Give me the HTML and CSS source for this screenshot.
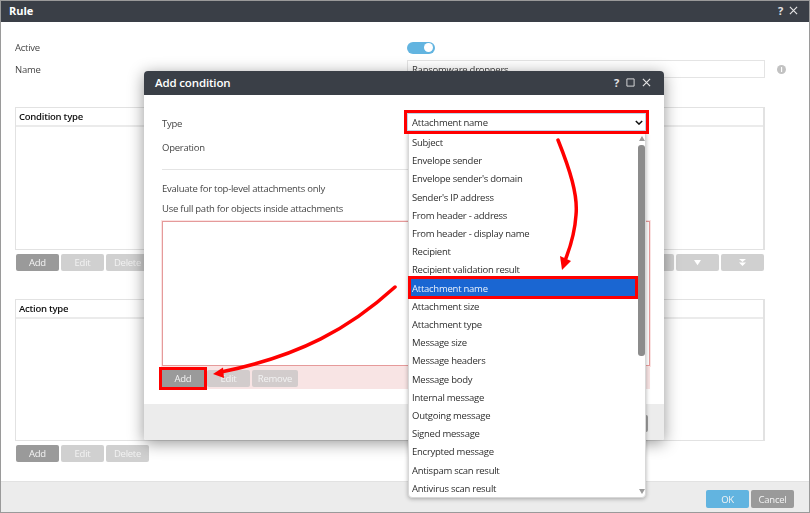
FILE: index.html
```html
<!DOCTYPE html>
<html lang="en">
<head>
<meta charset="utf-8">
<title>Rule</title>
<link rel="stylesheet" href="styles.css">
</head>
<body>
<div class="window">
  <header class="titlebar">
    <span class="title">Rule</span>
    <span class="title-tools">
      <span class="help">?</span>
      <svg class="tool" viewBox="0 0 10 10"><path d="M1 1l8 8M9 1l-8 8"/></svg>
    </span>
  </header>
  <main class="content">
    <div class="form">
      <span class="label">Active</span>
      <span class="toggle"><span class="knob"></span></span>
      <span></span>
      <span class="label">Name</span>
      <div class="input">Ransomware droppers</div>
      <span class="info">i</span>
    </div>
    <section class="table cond">
      <div class="thead">Condition type</div>
    </section>
    <div class="btnrow">
      <div class="btngroup">
        <button class="btn primary">Add</button><button class="btn">Edit</button><button class="btn">Delete</button>
      </div>
      <div class="btngroup">
        <button class="btn"><svg class="mv" viewBox="0 0 10 8"><path d="M5 1l4 6H1z"/></svg></button>
        <button class="btn"><svg class="mv" viewBox="0 0 10 8"><path d="M1 1h8L5 7z"/></svg></button>
        <button class="btn"><svg class="mv" viewBox="0 0 10 8"><path d="M1 0h8L5 3.500zM1 4h8L5 8z"/></svg></button>
      </div>
    </div>
    <section class="table act">
      <div class="thead">Action type</div>
    </section>
    <div class="btnrow">
      <div class="btngroup">
        <button class="btn primary">Add</button><button class="btn">Edit</button><button class="btn">Delete</button>
      </div>
    </div>
  </main>
  <footer class="footer">
    <button class="btn ok">OK</button><button class="btn primary">Cancel</button>
  </footer>
</div>

<div class="dialog">
  <header class="dlg-head">
    <span class="dlg-title">Add condition</span>
    <span class="dlg-tools">
      <span class="help">?</span>
      <svg class="tool small" viewBox="0 0 10 10"><path d="M1 1h8v8H1z"/></svg>
      <svg class="tool" viewBox="0 0 10 10"><path d="M1 1l8 8M9 1l-8 8"/></svg>
    </span>
  </header>
  <div class="dlg-body">
    <div class="dlg-form">
      <span class="label nudge">Type</span>
      <div class="select-wrap">
        <div class="select">
          <span>Attachment name</span>
          <svg class="chev" viewBox="0 0 10 6"><path d="M1 1l4 4 4-4"/></svg>
        </div>
        <div class="dropdown">
          <ul class="options">
            <li>Subject</li>
            <li>Envelope sender</li>
            <li>Envelope sender's domain</li>
            <li>Sender's IP address</li>
            <li>From header - address</li>
            <li>From header - display name</li>
            <li>Recipient</li>
            <li>Recipient validation result</li>
            <li class="selected">Attachment name</li>
            <li>Attachment size</li>
            <li>Attachment type</li>
            <li>Message size</li>
            <li>Message headers</li>
            <li>Message body</li>
            <li>Internal message</li>
            <li>Outgoing message</li>
            <li>Signed message</li>
            <li>Encrypted message</li>
            <li>Antispam scan result</li>
            <li>Antivirus scan result</li>
          </ul>
          <div class="scrollbar">
            <span class="arrow up"></span>
            <span class="thumb"></span>
            <span class="arrow down"></span>
          </div>
        </div>
      </div>
      <span class="label nudge">Operation</span>
      <span></span>
    </div>
    <hr class="rule">
    <div class="label opt">Evaluate for top-level attachments only</div>
    <div class="label opt">Use full path for objects inside attachments</div>
    <div class="invalid-list"></div>
    <div class="invalid-bar">
      <button class="btn primary marked">Add</button>
      <button class="btn tinted">Edit</button>
      <button class="btn tinted wide">Remove</button>
    </div>
  </div>
  <footer class="dlg-foot">
    <button class="btn primary">OK</button>
  </footer>
</div>

<svg class="arrows" viewBox="0 0 810 513">
  <path class="shaft" d="M558 140C570 170 578 195 576 215C575 230 571 245 566 258"/>
  <path class="head" d="M562 270L560 256L571 261z"/>
  <path class="shaft" d="M395 287C350 328 300 356 221 372"/>
  <path class="head" d="M213 374L223 367.500L224 378z"/>
</svg>
</body>
</html>
```

FILE: styles.css
```css
* { box-sizing: border-box; }
html, body { margin: 0; padding: 0; }
body {
  position: relative;
  width: 810px;
  height: 513px;
  overflow: hidden;
  background: #fff;
  font-family: "Open Sans", "Noto Sans", sans-serif;
  font-size: 9.5px;
  letter-spacing: -.25px;
  color: #444;
  filter: blur(.3px);
}
.window {
  width: 810px;
  height: 513px;
  border: 1px solid #9a9a9a;
  display: flex;
  flex-direction: column;
}
.titlebar {
  height: 21px;
  flex: none;
  background: #3a3f47;
  color: #fff;
  display: flex;
  align-items: center;
  justify-content: space-between;
  padding: 0 11px 2px 8px;
}
.title { font-size: 11px; font-weight: 700; letter-spacing: 0; }
.title-tools, .dlg-tools { display: flex; align-items: center; gap: 6px; }
.help { font-size: 11px; font-weight: 700; color: #e4e4e4; line-height: 1; }
.tool { width: 9px; height: 9px; fill: none; stroke: #e4e4e4; stroke-width: 1.3; }
.content { flex: 1; padding: 19px 44px 0 14px; }
.form {
  display: grid;
  grid-template-columns: 392px 358px auto;
  row-gap: 6px;
  align-items: center;
}
.label { color: #464646; }
.toggle {
  width: 28px;
  height: 12px;
  border-radius: 6px;
  background: #62b4e0;
  display: flex;
  justify-content: flex-end;
  align-items: center;
  padding-right: 2px;
}
.knob { width: 9px; height: 9px; border-radius: 50%; background: #fff; }
.input {
  height: 18px;
  border: 1px solid #e4e4e4;
  padding-left: 4px;
  line-height: 17px;
  color: #3c3c3c;
}
.info {
  width: 9px;
  height: 9px;
  margin: 0 0 0 12px;
  border-radius: 50%;
  background: #c2c2c2;
  color: #fff;
  font-size: 7px;
  font-weight: 700;
  line-height: 9px;
  text-align: center;
}
.table { border: 1px solid #e2e2e2; border-width: 1px 2px 1px 1px; }
.cond { height: 143px; margin-top: 29px; }
.act { height: 142px; margin-top: 28px; }
.thead {
  height: 19px;
  border-bottom: 2px solid #ebebeb;
  padding-left: 3px;
  color: #111;
  font-weight: 600;
  line-height: 17px;
}
.btnrow {
  display: flex;
  justify-content: space-between;
  margin-top: 4px;
  padding: 0 1px;
}
.btngroup { display: flex; gap: 2px; }
.btn {
  width: 43px;
  height: 17px;
  border: 0;
  border-radius: 2px;
  padding: 0;
  background: #d0d0d0;
  color: #f2f2f2;
  font: inherit;
  letter-spacing: inherit;
  line-height: 17px;
  display: flex;
  align-items: center;
  justify-content: center;
}
.btn.primary { background: #9a9a9a; color: #f4f4f4; }
.btn.ok { background: #62b4e0; color: #f4f4f4; }
.mv { width: 9px; height: 7px; fill: #fff; }
.footer {
  height: 31px;
  flex: none;
  background: #ececec;
  border-top: 1px solid #e2e2e2;
  display: flex;
  justify-content: flex-end;
  align-items: flex-start;
  gap: 2px;
  padding: 8px 15px 0 0;
}
.footer .btn { height: 18px; }

.dialog {
  position: absolute;
  left: 144px;
  top: 71px;
  width: 520px;
  height: 369px;
  background: #fff;
  border-radius: 4px 4px 2px 2px;
  box-shadow: 0 3px 16px rgba(0, 0, 0, .42);
  display: flex;
  flex-direction: column;
}
.dlg-head {
  height: 24px;
  flex: none;
  background: #3a3f47;
  color: #fff;
  border-radius: 4px 4px 0 0;
  display: flex;
  align-items: center;
  justify-content: space-between;
  padding: 0 13px 2px 11px;
}
.dlg-title { font-size: 11.500px; font-weight: 600; letter-spacing: -.15px; }
.dlg-tools { gap: 7px; }
.tool.small { width: 9px; height: 9px; stroke-width: 1; }
.dlg-body { flex: 1; padding: 18px 18px 0; }
.dlg-form {
  display: grid;
  grid-template-columns: 245px 1fr;
  grid-auto-rows: 18px;
  row-gap: 6px;
  align-items: center;
}
.nudge { padding-top: 2px; }
.select-wrap { position: relative; z-index: 2; height: 18px; }
.select {
  height: 18px;
  border: 1px solid #bcd6e8;
  outline: 3px solid #f00;
  background: #fff;
  color: #2e2e2e;
  padding: 1px 2px 0 4px;
  display: flex;
  align-items: center;
  justify-content: space-between;
  position: relative;
  z-index: 2;
}
.chev { width: 8px; height: 5px; fill: none; stroke: #111; stroke-width: 1.800; }
.dropdown {
  position: absolute;
  left: 1px;
  top: 19px;
  width: 238px;
  background: #fff;
  border: 1px solid #d8d8d8;
  border-radius: 0 0 4px 4px;
  box-shadow: 0 1px 4px rgba(0, 0, 0, .3);
  display: flex;
}
.options { list-style: none; margin: 0; padding: 0; width: 229px; }
.options li {
  height: 18.210px;
  line-height: 18.210px;
  margin: 0 3px 0 2px;
  padding: 1px 0 0 1px;
  color: #2e2e2e;
}
.options li.selected {
  height: 17px;
  margin-bottom: 1.210px;
  background: #1a66d2;
  color: #e8f0fa;
  outline: 3px solid #f00;
  position: relative;
}
.scrollbar { width: 7px; display: flex; flex-direction: column; align-items: center; padding-top: 3px; }
.arrow { width: 0; height: 0; border-left: 3.500px solid transparent; border-right: 3.500px solid transparent; }
.arrow.up { border-bottom: 5px solid #9a9a9a; }
.arrow.down { border-top: 5px solid #9a9a9a; margin-top: auto; margin-bottom: 3px; }
.thumb { width: 7px; height: 211px; margin-top: 4px; border-radius: 3px; background: #8c8c8c; }
.rule { border: 0; border-top: 1px solid #e4e4e4; margin: 14px 0 10px; }
.opt { height: 18px; line-height: 18px; margin-bottom: 2px; }
.invalid-list {
  height: 145px;
  margin: 3px -4px 0 0;
  border: 1px solid #e59a9a;
  box-shadow: 0 0 0 1px #fbe3e3;
}
.invalid-bar {
  height: 22px;
  margin: 1px -4px 0 0;
  background: #f8e4e4;
  display: flex;
  align-items: center;
  gap: 2px;
}
.btn.marked { width: 42px; outline: 3px solid #f00; margin-right: 1px; border-radius: 0; }
.btn.tinted { background: #d2cccc; }
.btn.tinted.wide { width: 46px; }
.dlg-foot {
  height: 36px;
  flex: none;
  background: #ececec;
  border-radius: 0 0 2px 2px;
  display: flex;
  justify-content: flex-end;
  padding: 11px 16px 0 0;
}
.arrows { position: absolute; left: 0; top: 0; width: 810px; height: 513px; pointer-events: none; z-index: 3; }
.shaft { fill: none; stroke: #f00; stroke-width: 3.500; stroke-linecap: round; }
.head { fill: #f00; }
```
